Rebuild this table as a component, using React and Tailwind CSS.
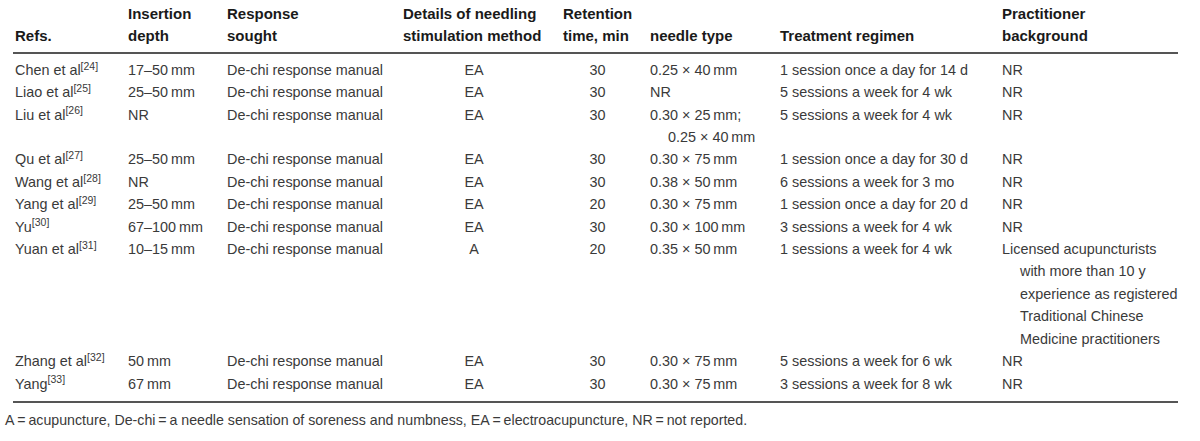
import React from 'react';

const rows = [
  { ref: 'Chen et al', n: 24, depth: '17–50\u2009mm', method: 'EA', time: '30', needle: ['0.25 × 40\u2009mm'], regimen: '1 session once a day for 14 d', bg: ['NR'] },
  { ref: 'Liao et al', n: 25, depth: '25–50\u2009mm', method: 'EA', time: '30', needle: ['NR'], regimen: '5 sessions a week for 4 wk', bg: ['NR'] },
  { ref: 'Liu et al', n: 26, depth: 'NR', method: 'EA', time: '30', needle: ['0.30 × 25\u2009mm;', '0.25 × 40\u2009mm'], regimen: '5 sessions a week for 4 wk', bg: ['NR'] },
  { ref: 'Qu et al', n: 27, depth: '25–50\u2009mm', method: 'EA', time: '30', needle: ['0.30 × 75\u2009mm'], regimen: '1 session once a day for 30 d', bg: ['NR'] },
  { ref: 'Wang et al', n: 28, depth: 'NR', method: 'EA', time: '30', needle: ['0.38 × 50\u2009mm'], regimen: '6 sessions a week for 3 mo', bg: ['NR'] },
  { ref: 'Yang et al', n: 29, depth: '25–50\u2009mm', method: 'EA', time: '20', needle: ['0.30 × 75\u2009mm'], regimen: '1 session once a day for 20 d', bg: ['NR'] },
  { ref: 'Yu', n: 30, depth: '67–100\u2009mm', method: 'EA', time: '30', needle: ['0.30 × 100\u2009mm'], regimen: '3 sessions a week for 4 wk', bg: ['NR'] },
  {
    ref: 'Yuan et al', n: 31, depth: '10–15\u2009mm', method: 'A', time: '20', needle: ['0.35 × 50\u2009mm'], regimen: '1 sessions a week for 4 wk',
    bg: ['Licensed acupuncturists', 'with more than 10 y', 'experience as registered', 'Traditional Chinese', 'Medicine practitioners'],
  },
  { ref: 'Zhang et al', n: 32, depth: '50\u2009mm', method: 'EA', time: '30', needle: ['0.30 × 75\u2009mm'], regimen: '5 sessions a week for 6 wk', bg: ['NR'] },
  { ref: 'Yang', n: 33, depth: '67\u2009mm', method: 'EA', time: '30', needle: ['0.30 × 75\u2009mm'], regimen: '3 sessions a week for 8 wk', bg: ['NR'] },
];

const Lines = ({ items }) =>
  items.map((t, i) => (
    <div key={i} className={i > 0 ? 'pl-[18px]' : ''}>
      {t}
    </div>
  ));

export default function App() {
  const cell = 'pl-[2px] pr-[16px] align-top whitespace-nowrap';
  const head = 'pl-[2px] pr-[8px] pt-[3px] pb-[4px] align-bottom text-left font-bold text-[15px] text-[#1a1a1a] whitespace-nowrap';

  return (
    <div
      className="w-[1200px] h-[441px] overflow-hidden bg-white text-[#3a3a3a] text-[14.4px] leading-[22.4px]"
      style={{ fontFamily: '"Liberation Sans", Arial, sans-serif' }}
    >
      <table className="ml-[13px] w-[1165px] table-fixed border-collapse">
        <colgroup>
          <col className="w-[113px]" />
          <col className="w-[99px]" />
          <col className="w-[176px]" />
          <col className="w-[160px]" />
          <col className="w-[87px]" />
          <col className="w-[130px]" />
          <col className="w-[222px]" />
          <col className="w-[178px]" />
        </colgroup>
        <thead>
          <tr className="border-b-2 border-[#555]">
            <th className={head}>Refs.</th>
            <th className={head}>Insertion<br />depth</th>
            <th className={head}>Response<br />sought</th>
            <th className={head}>Details of needling<br />stimulation method</th>
            <th className={head}>Retention<br />time, min</th>
            <th className={head}>needle type</th>
            <th className={head}>Treatment regimen</th>
            <th className={head}>Practitioner<br />background</th>
          </tr>
        </thead>
        <tbody>
          {rows.map((r, i) => {
            const pad = i === 0 ? 'pt-[5px]' : i === rows.length - 1 ? 'pb-[6px]' : '';
            return (
              <tr key={r.n} className={i === rows.length - 1 ? 'border-b-2 border-[#555]' : ''}>
                <td className={`${cell} ${pad}`}>
                  {r.ref}
                  <sup className="text-[10.5px]">[{r.n}]</sup>
                </td>
                <td className={`${cell} ${pad}`}>{r.depth}</td>
                <td className={`${cell} ${pad}`}>De-chi response manual</td>
                <td className={`${cell} ${pad} text-center`}>{r.method}</td>
                <td className={`${cell} ${pad} text-center`}>{r.time}</td>
                <td className={`${cell} ${pad}`}>
                  <Lines items={r.needle} />
                </td>
                <td className={`${cell} ${pad}`}>{r.regimen}</td>
                <td className={`${cell} ${pad}`}>
                  <Lines items={r.bg} />
                </td>
              </tr>
            );
          })}
        </tbody>
      </table>
      <p className="pl-[5px] pt-[6px] text-[14.2px] text-[#3a3a3a] whitespace-nowrap">
        A{'\u2009'}={'\u2009'}acupuncture, De-chi{'\u2009'}={'\u2009'}a needle sensation of soreness and numbness, EA{'\u2009'}={'\u2009'}electroacupuncture, NR{'\u2009'}={'\u2009'}not reported.
      </p>
    </div>
  );
}
